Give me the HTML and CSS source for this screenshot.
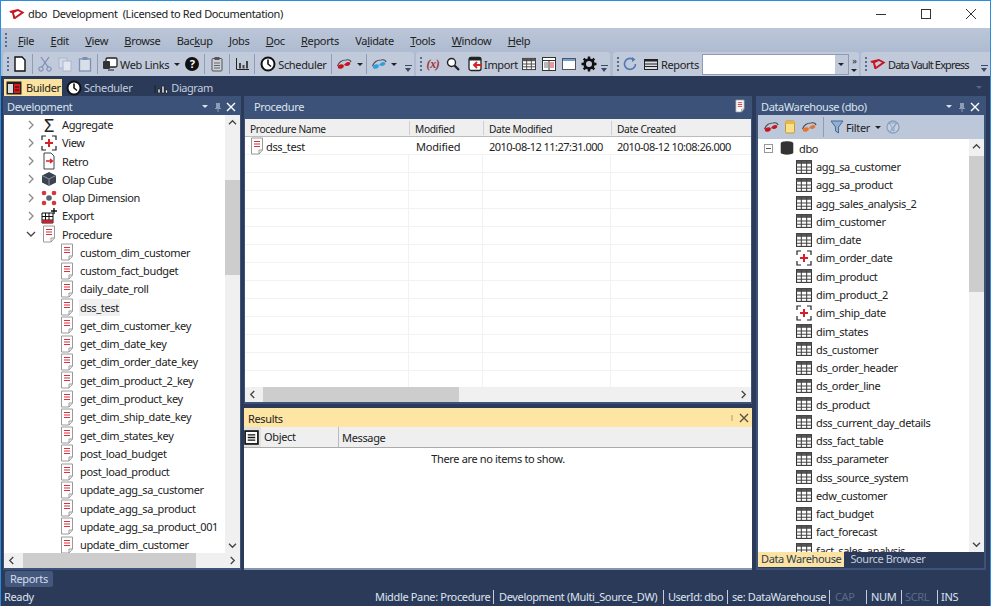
FILE: index.html
```html
<!DOCTYPE html>
<html lang="en">
<head>
    <meta charset="UTF-8">
    <title>dbo Development</title>
    <link rel="stylesheet" href="styles.css">
</head>
<body>
<svg class="sprites" width="0" height="0">
    <symbol id="i-proc" viewBox="0 0 16 18">
        <path d="M2.5 1 L13.5 1 L13.5 13 L10 17 L2.5 17 Z" fill="#fff" stroke="#9a9a9a"/>
        <path d="M10 17 L10 13 L13.5 13" fill="none" stroke="#9a9a9a"/>
        <path d="M5 4.5 H11 M5 7 H11 M5 9.5 H11" stroke="#d8323c" stroke-width="1.2"/>
    </symbol>
    <symbol id="i-table" viewBox="0 0 15 13">
        <rect x="0.5" y="0.5" width="14" height="12" fill="#fff" stroke="#333"/>
        <rect x="0.5" y="0.5" width="14" height="3" fill="#555"/>
        <path d="M5 1 V12.5 M10 1 V12.5 M1 6.5 H14 M1 9.5 H14" stroke="#444"/>
    </symbol>
    <symbol id="i-view" viewBox="0 0 16 16">
        <path d="M1 5 V1 H5 M11 1 H15 V5 M15 11 V15 H11 M5 15 H1 V11" fill="none" stroke="#222" stroke-width="1.2"/>
        <path d="M8 4 V12 M4 8 H12" stroke="#d8202c" stroke-width="2"/>
    </symbol>
    <symbol id="i-glasses" viewBox="0 0 16 12">
        <path d="M1.5 8 C3 4 6 2 10 2 C12 1.5 14.5 2 15 4" fill="none" stroke="#4a4a50" stroke-width="1.1"/>
        <ellipse cx="4.8" cy="8.6" rx="3" ry="2.1" fill="currentColor" transform="rotate(-15 4.8 8.6)"/>
        <ellipse cx="11.6" cy="6" rx="2.8" ry="1.9" fill="currentColor" transform="rotate(-20 11.6 6)"/>
        <path d="M7.5 7.5 L9 6.5" stroke="currentColor"/>
    </symbol>
    <symbol id="i-clock" viewBox="0 0 16 16">
        <circle cx="8" cy="8" r="6.5" fill="#fff" stroke="#111" stroke-width="2"/>
        <path d="M8 3.5 V8 L11 10.5" fill="none" stroke="#111" stroke-width="1.6"/>
    </symbol>
    <symbol id="i-chart" viewBox="0 0 14 12">
        <path d="M1.5 0 V11.5 H14" fill="none" stroke="#222"/>
        <path d="M4 5 H6 V10.5 H4 Z M7.5 7 H9.5 V10.5 H7.5 Z M11 3 H13 V10.5 H11 Z" fill="#444"/>
    </symbol>
    <symbol id="i-logo" viewBox="0 0 16 12">
        <path d="M0.5 3 L9 1 L15.5 4.5 L6 11 L4.5 11 L3 5 L1 4.5 Z M4.8 5 L6.2 8.8 L12 4.6 L8.8 3 Z" fill="#c8141e" fill-rule="evenodd"/>
    </symbol>
</svg>

<div class="window">
    <div class="titlebar">
        <svg class="title-logo"><use href="#i-logo"/></svg>
        <span class="title-text">dbo&nbsp; Development&nbsp; (Licensed to Red Documentation)</span>
        <div class="winbtns">
            <svg class="winbtn" viewBox="0 0 12 12"><path d="M1 6.5 H11" stroke="#333"/></svg>
            <svg class="winbtn" viewBox="0 0 12 12"><rect x="1.5" y="1.5" width="9" height="9" fill="none" stroke="#333"/></svg>
            <svg class="winbtn" viewBox="0 0 12 12"><path d="M1 1 L11 11 M11 1 L1 11" stroke="#333"/></svg>
        </div>
    </div>

    <div class="menubar">
        <i class="grip"></i>
        <span><u>F</u>ile</span>
        <span><u>E</u>dit</span>
        <span><u>V</u>iew</span>
        <span><u>B</u>rowse</span>
        <span>Bac<u>k</u>up</span>
        <span><u>J</u>obs</span>
        <span><u>D</u>oc</span>
        <span><u>R</u>eports</span>
        <span>Va<u>l</u>idate</span>
        <span><u>T</u>ools</span>
        <span><u>W</u>indow</span>
        <span><u>H</u>elp</span>
    </div>

    <div class="toolrow">
        <div class="toolbar tb-main">
            <i class="grip"></i>
            <span class="tool w20"><svg class="ic16" viewBox="0 0 14 16"><path d="M2 1 H9 L12 4 V15 H2 Z" fill="#fff" stroke="#111" stroke-width="1.4"/></svg></span>
            <i class="sep"></i>
            <span class="tool w20"><svg class="ic16" viewBox="0 0 16 16"><path d="M4 1 L11 11 M12 1 L5 11" stroke="#7c90b4" stroke-width="1.3"/><circle cx="4" cy="13" r="2.2" fill="none" stroke="#6f86ad"/><circle cx="12" cy="13" r="2.2" fill="none" stroke="#6f86ad"/></svg></span>
            <span class="tool w20"><svg class="ic16" viewBox="0 0 16 16"><rect x="2" y="2" width="8" height="10" fill="#d3dbe8" stroke="#a9b6cc"/><rect x="6" y="5" width="8" height="10" fill="#e3e8f0" stroke="#a9b6cc"/></svg></span>
            <span class="tool w20"><svg class="ic16" viewBox="0 0 16 16"><rect x="2.5" y="3" width="11" height="12" fill="#d8dfea" stroke="#7c90b4" stroke-width="1.3"/><rect x="5.5" y="1" width="5" height="3" fill="#7c90b4"/></svg></span>
            <i class="sep"></i>
            <span class="tool w20"><svg class="ic16" viewBox="0 0 16 16"><rect x="4" y="2" width="11" height="9" rx="1.5" fill="#fff" stroke="#222" stroke-width="1.3"/><rect x="1" y="5" width="7" height="8" rx="1" fill="#333"/><path d="M6 14 H12" stroke="#222"/></svg></span>
            <span class="tool-label">Web Links</span>
            <i class="drop d-web"></i>
            <span class="help">?</span>
            <i class="sep"></i>
            <span class="tool w20"><svg class="ic16" viewBox="0 0 14 16"><rect x="2" y="2.5" width="10" height="12.5" rx="1" fill="#c9ced8" stroke="#555"/><rect x="4.5" y="1" width="5" height="3" fill="#555"/><path d="M4 7 H10 M4 9.5 H10 M4 12 H10" stroke="#666"/></svg></span>
            <i class="sep"></i>
            <span class="tool w20"><svg class="ic14"><use href="#i-chart"/></svg></span>
            <i class="sep"></i>
            <span class="tool w20 ml1"><svg class="ic16"><use href="#i-clock"/></svg></span>
            <span class="tool-label lbl-sched">Scheduler</span>
            <i class="sep ml5"></i>
            <span class="tool w20 red"><svg class="ic16"><use href="#i-glasses"/></svg></span>
            <i class="drop d-red"></i>
            <i class="sep ml3"></i>
            <span class="tool w20 blue"><svg class="ic16"><use href="#i-glasses"/></svg></span>
            <i class="drop d-blue"></i>
            <i class="chev"></i>
        </div>
        <div class="toolbar tb-tools">
            <i class="grip"></i>
            <span class="tool w20 formula">(x)</span>
            <span class="tool w20"><svg class="ic14" viewBox="0 0 14 14"><circle cx="5.5" cy="5.5" r="4" fill="#fff" stroke="#222" stroke-width="1.4"/><path d="M8.5 8.5 L13 13" stroke="#222" stroke-width="2.2"/></svg></span>
            <span class="tool w18 ml3"><svg class="ic16" viewBox="0 0 16 16"><rect x="2" y="1.5" width="12" height="13" rx="2" fill="#fff" stroke="#222" stroke-width="1.3"/><rect x="2" y="1.5" width="12" height="3" fill="#222"/><path d="M15 9 H7 M10 6 L7 9 L10 12" fill="none" stroke="#d8202c" stroke-width="1.8"/></svg></span>
            <span class="tool-label lbl-import">Import</span>
            <span class="tool w20"><svg class="ic14"><use href="#i-table"/></svg></span>
            <span class="tool w20"><svg class="ic14" viewBox="0 0 14 14"><rect x="0.5" y="0.5" width="13" height="13" fill="#fff" stroke="#333"/><path d="M1 3.5 H13 M7 3.5 V13" stroke="#333"/><path d="M2 6 H6 M2 8 H6 M2 10 H6" stroke="#777"/><path d="M8 6 H12 M8 8 H12 M8 10 H12" stroke="#d8323c"/></svg></span>
            <span class="tool w20"><svg class="ic14" viewBox="0 0 14 12"><rect x="0.5" y="0.5" width="13" height="11" fill="#fff" stroke="#555"/><rect x="1" y="1" width="12" height="2" fill="#6aa0e0"/></svg></span>
            <span class="tool w20"><svg class="ic16" viewBox="0 0 16 16"><circle cx="8" cy="8" r="4.4" fill="none" stroke="#111" stroke-width="2.8"/><path d="M8 0.5 V15.5 M0.5 8 H15.5 M2.7 2.7 L13.3 13.3 M13.3 2.7 L2.7 13.3" stroke="#111" stroke-width="2.4" stroke-dasharray="3 9"/></svg></span>
            <i class="chev"></i>
        </div>
        <div class="toolbar tb-reports">
            <i class="grip"></i>
            <span class="tool w20"><svg class="ic14" viewBox="0 0 14 14"><path d="M12.5 7 A5.5 5.5 0 1 1 9.5 2" fill="none" stroke="#4f78b4" stroke-width="1.6"/><path d="M9 0 L12.5 2.5 L9 5 Z" fill="#4f78b4"/></svg></span>
            <span class="tool w20 ml1"><svg class="ic14" viewBox="0 0 14 12"><rect x="0.5" y="1.5" width="13" height="10" fill="#d8dce4" stroke="#222"/><rect x="0.5" y="1.5" width="13" height="2" fill="#222"/><path d="M1 6 H13 M1 8.5 H13" stroke="#222"/></svg></span>
            <span class="tool-label">Reports</span>
            <div class="combo"><div class="combo-btn"><i class="drop"></i></div></div>
            <div class="more"><span>&raquo;</span><i class="drop"></i></div>
        </div>
        <div class="toolbar tb-vault">
            <i class="grip"></i>
            <span class="tool w20"><svg class="ic16"><use href="#i-logo"/></svg></span>
            <span class="tool-label lbl-vault">Data Vault Express</span>
            <i class="chev"></i>
        </div>
    </div>

    <div class="tabstrip">
        <div class="tab tab-on">
            <svg class="ic16" viewBox="0 0 16 14"><rect x="0.5" y="0.5" width="15" height="13" fill="#222"/><rect x="2" y="3" width="5" height="9" fill="#ddd"/><rect x="8" y="3" width="6" height="9" fill="#e01818"/><path d="M9 6 H13 M9 9 H13" stroke="#111"/></svg>
            Builder
        </div>
        <div class="tab"><svg class="ic16"><use href="#i-clock"/></svg>Scheduler</div>
        <div class="tab tab-diagram"><svg class="ic14" viewBox="0 0 14 12"><path d="M1 3 V11 M4 7 H6 V11 H4 Z M8 4 H10 V11 H8 Z M11.5 8 H13.5 V11 H11.5 Z" fill="#fff" stroke="#111" stroke-width="0.6"/></svg>Diagram</div>
        <i class="drop strip-drop"></i>
    </div>

    <div class="work">
        <section class="pane pane-left">
            <header class="pane-head">
                <span class="pane-title">Development</span>
                <i class="drop"></i>
                <svg class="pin" viewBox="0 0 8 10"><path d="M2 1 H6 V6 H7 V7 H4.5 V10 H3.5 V7 H1 V6 H2 Z" fill="#8d9bb5"/></svg>
                <svg class="close" viewBox="0 0 10 10"><path d="M1 1 L9 9 M9 1 L1 9" stroke="#fff" stroke-width="1.4"/></svg>
            </header>
            <div class="scroll-area">
                <div class="tree">
                    <div class="row group"><svg class="twist" viewBox="0 0 8 10"><path d="M2 1 L6 5 L2 9" /></svg><span class="sigma">&Sigma;</span><span>Aggregate</span></div>
                    <div class="row group"><svg class="twist" viewBox="0 0 8 10"><path d="M2 1 L6 5 L2 9" /></svg><svg class="ic"><use href="#i-view"/></svg><span>View</span></div>
                    <div class="row group"><svg class="twist" viewBox="0 0 8 10"><path d="M2 1 L6 5 L2 9" /></svg><svg class="ic" viewBox="0 0 16 18"><path d="M3 1 H10 L13 4 V17 H3 Z" fill="#fff" stroke="#444"/><path d="M5 9 H11 M9 7 L11.5 9 L9 11" fill="none" stroke="#d8202c" stroke-width="1.4"/></svg><span>Retro</span></div>
                    <div class="row group"><svg class="twist" viewBox="0 0 8 10"><path d="M2 1 L6 5 L2 9" /></svg><svg class="ic" viewBox="0 0 16 16"><path d="M8 1 L15 4.5 V11.5 L8 15 L1 11.5 V4.5 Z" fill="#3c4350"/><path d="M1 4.5 L8 8 L15 4.5 M8 8 V15" fill="none" stroke="#8b93a3"/></svg><span>Olap Cube</span></div>
                    <div class="row group"><svg class="twist" viewBox="0 0 8 10"><path d="M2 1 L6 5 L2 9" /></svg><svg class="ic" viewBox="0 0 16 16"><circle cx="3" cy="3" r="2.3" fill="#d8353c"/><circle cx="13" cy="3" r="2.3" fill="#d8353c"/><circle cx="3" cy="13" r="2.3" fill="#d8353c"/><circle cx="13" cy="13" r="2.3" fill="#d8353c"/><circle cx="8" cy="8" r="2.8" fill="#59626f"/></svg><span>Olap Dimension</span></div>
                    <div class="row group"><svg class="twist" viewBox="0 0 8 10"><path d="M2 1 L6 5 L2 9" /></svg><svg class="ic" viewBox="0 0 16 16"><path d="M1 5 H12 V15 H1 Z M4.5 5 V15 M8 5 V15 M1 8.5 H12 M1 12 H12" fill="#fff" stroke="#111"/><rect x="1" y="12" width="11" height="3" fill="#c8202c"/><path d="M13 0 V6 M10 3 H16" stroke="#111" stroke-width="1.4"/></svg><span>Export</span></div>
                    <div class="row group"><svg class="twist open" viewBox="0 0 10 8"><path d="M1 2 L5 6 L9 2" /></svg><svg class="ic"><use href="#i-proc"/></svg><span>Procedure</span></div>
                    <div class="row leaf"><svg class="ic"><use href="#i-proc"/></svg><span>custom_dim_customer</span></div>
                    <div class="row leaf"><svg class="ic"><use href="#i-proc"/></svg><span>custom_fact_budget</span></div>
                    <div class="row leaf"><svg class="ic"><use href="#i-proc"/></svg><span>daily_date_roll</span></div>
                    <div class="row leaf"><svg class="ic"><use href="#i-proc"/></svg><span class="picked">dss_test</span></div>
                    <div class="row leaf"><svg class="ic"><use href="#i-proc"/></svg><span>get_dim_customer_key</span></div>
                    <div class="row leaf"><svg class="ic"><use href="#i-proc"/></svg><span>get_dim_date_key</span></div>
                    <div class="row leaf"><svg class="ic"><use href="#i-proc"/></svg><span>get_dim_order_date_key</span></div>
                    <div class="row leaf"><svg class="ic"><use href="#i-proc"/></svg><span>get_dim_product_2_key</span></div>
                    <div class="row leaf"><svg class="ic"><use href="#i-proc"/></svg><span>get_dim_product_key</span></div>
                    <div class="row leaf"><svg class="ic"><use href="#i-proc"/></svg><span>get_dim_ship_date_key</span></div>
                    <div class="row leaf"><svg class="ic"><use href="#i-proc"/></svg><span>get_dim_states_key</span></div>
                    <div class="row leaf"><svg class="ic"><use href="#i-proc"/></svg><span>post_load_budget</span></div>
                    <div class="row leaf"><svg class="ic"><use href="#i-proc"/></svg><span>post_load_product</span></div>
                    <div class="row leaf"><svg class="ic"><use href="#i-proc"/></svg><span>update_agg_sa_customer</span></div>
                    <div class="row leaf"><svg class="ic"><use href="#i-proc"/></svg><span>update_agg_sa_product</span></div>
                    <div class="row leaf"><svg class="ic"><use href="#i-proc"/></svg><span>update_agg_sa_product_001</span></div>
                    <div class="row leaf"><svg class="ic"><use href="#i-proc"/></svg><span>update_dim_customer</span></div>
                </div>
                <div class="vscroll">
                    <svg class="arrow" viewBox="0 0 10 8"><path d="M1 6 L5 2 L9 6"/></svg>
                    <div class="vtrack"><div class="vthumb thumb-left"></div></div>
                    <svg class="arrow" viewBox="0 0 10 8"><path d="M1 2 L5 6 L9 2"/></svg>
                </div>
            </div>
            <div class="hscroll hscroll-left">
                <svg class="arrow-h" viewBox="0 0 8 10"><path d="M6 1 L2 5 L6 9"/></svg>
                <div class="htrack"><div class="hthumb thumb-h-left"></div></div>
                <svg class="arrow-h" viewBox="0 0 8 10"><path d="M2 1 L6 5 L2 9"/></svg>
            </div>
        </section>

        <div class="middle">
            <section class="pane pane-proc">
                <header class="pane-head proc-head">
                    <span class="pane-title">Procedure</span>
                    <svg class="head-doc"><use href="#i-proc"/></svg>
                </header>
                <div class="grid">
                    <div class="grid-head">
                        <span class="col1">Procedure Name</span>
                        <span class="col2">Modified</span>
                        <span class="col3">Date Modified</span>
                        <span class="col4">Date Created</span>
                    </div>
                    <div class="grid-row">
                        <span class="col1"><svg class="ic"><use href="#i-proc"/></svg>dss_test</span>
                        <span class="col2">Modified</span>
                        <span class="col3">2010-08-12 11:27:31.000</span>
                        <span class="col4">2010-08-12 10:08:26.000</span>
                    </div>
                    <div class="grid-blank"></div>
                </div>
                <div class="hscroll hscroll-proc">
                    <svg class="arrow-h" viewBox="0 0 8 10"><path d="M6 1 L2 5 L6 9"/></svg>
                    <div class="htrack"><div class="hthumb thumb-h-proc"></div></div>
                    <svg class="arrow-h" viewBox="0 0 8 10"><path d="M2 1 L6 5 L2 9"/></svg>
                </div>
            </section>
            <section class="results">
                <header class="results-head">
                    <span>Results</span>
                    <svg class="pin" viewBox="0 0 8 10"><path d="M4 2 V8" stroke="#a89a78"/></svg>
                    <svg class="close" viewBox="0 0 10 10"><path d="M1 1 L9 9 M9 1 L1 9" stroke="#5a5140" stroke-width="1.4"/></svg>
                </header>
                <div class="results-cols">
                    <span class="res-menu"><svg viewBox="0 0 14 14"><rect x="1" y="1" width="12" height="12" fill="#fff" stroke="#111" stroke-width="1.6"/><path d="M3.5 4.5 H10.5 M3.5 7 H10.5 M3.5 9.5 H10.5" stroke="#111" stroke-width="1.2"/></svg></span>
                    <span class="res-object">Object</span>
                    <span class="res-message">Message</span>
                </div>
                <div class="results-empty">There are no items to show.</div>
            </section>
        </div>

        <section class="pane pane-right">
            <header class="pane-head">
                <span class="pane-title">DataWarehouse (dbo)</span>
                <i class="drop"></i>
                <svg class="pin" viewBox="0 0 8 10"><path d="M2 1 H6 V6 H7 V7 H4.5 V10 H3.5 V7 H1 V6 H2 Z" fill="#8d9bb5"/></svg>
                <svg class="close" viewBox="0 0 10 10"><path d="M1 1 L9 9 M9 1 L1 9" stroke="#fff" stroke-width="1.4"/></svg>
            </header>
            <div class="dw-tools">
                <span class="tool w20 red"><svg class="ic16"><use href="#i-glasses"/></svg></span>
                <span class="tool w18"><svg class="ic14" viewBox="0 0 12 14"><rect x="1.5" y="1" width="9" height="12" rx="1.5" fill="#fbe08a" stroke="#c09a30"/><rect x="1.5" y="1" width="9" height="3" fill="#eab83c"/></svg></span>
                <span class="tool w20 orange"><svg class="ic16"><use href="#i-glasses"/></svg></span>
                <i class="sep"></i>
                <span class="tool w18"><svg class="ic14" viewBox="0 0 14 14"><path d="M1 1 H13 L8.5 7 V13 L5.5 11 V7 Z" fill="#8fb0d8" stroke="#47688f"/></svg></span>
                <span class="tool-label">Filter</span>
                <i class="drop d-filter"></i>
                <svg class="ic14" viewBox="0 0 14 14"><circle cx="7" cy="7" r="6" fill="#c6d0e0" stroke="#8aa0c0" stroke-width="1.3"/><path d="M3 3 H11 L8 7 V11 L6 10 V7 Z M11 2 L4 12" fill="none" stroke="#8aa0c0"/></svg>
            </div>
            <div class="scroll-area">
                <div class="tree tree-dw">
                    <div class="row dw-root"><span class="minus"></span><svg class="ic" viewBox="0 0 14 14"><path d="M1.5 3 C1.5 0.5 12.5 0.5 12.5 3 V11 C12.5 13.5 1.5 13.5 1.5 11 Z" fill="#333"/></svg><span>dbo</span></div>
                    <div class="row dw"><svg class="ic"><use href="#i-table"/></svg><span>agg_sa_customer</span></div>
                    <div class="row dw"><svg class="ic"><use href="#i-table"/></svg><span>agg_sa_product</span></div>
                    <div class="row dw"><svg class="ic"><use href="#i-table"/></svg><span>agg_sales_analysis_2</span></div>
                    <div class="row dw"><svg class="ic"><use href="#i-table"/></svg><span>dim_customer</span></div>
                    <div class="row dw"><svg class="ic"><use href="#i-table"/></svg><span>dim_date</span></div>
                    <div class="row dw"><svg class="ic"><use href="#i-view"/></svg><span>dim_order_date</span></div>
                    <div class="row dw"><svg class="ic"><use href="#i-table"/></svg><span>dim_product</span></div>
                    <div class="row dw"><svg class="ic"><use href="#i-table"/></svg><span>dim_product_2</span></div>
                    <div class="row dw"><svg class="ic"><use href="#i-view"/></svg><span>dim_ship_date</span></div>
                    <div class="row dw"><svg class="ic"><use href="#i-table"/></svg><span>dim_states</span></div>
                    <div class="row dw"><svg class="ic"><use href="#i-table"/></svg><span>ds_customer</span></div>
                    <div class="row dw"><svg class="ic"><use href="#i-table"/></svg><span>ds_order_header</span></div>
                    <div class="row dw"><svg class="ic"><use href="#i-table"/></svg><span>ds_order_line</span></div>
                    <div class="row dw"><svg class="ic"><use href="#i-table"/></svg><span>ds_product</span></div>
                    <div class="row dw"><svg class="ic"><use href="#i-table"/></svg><span>dss_current_day_details</span></div>
                    <div class="row dw"><svg class="ic"><use href="#i-table"/></svg><span>dss_fact_table</span></div>
                    <div class="row dw"><svg class="ic"><use href="#i-table"/></svg><span>dss_parameter</span></div>
                    <div class="row dw"><svg class="ic"><use href="#i-table"/></svg><span>dss_source_system</span></div>
                    <div class="row dw"><svg class="ic"><use href="#i-table"/></svg><span>edw_customer</span></div>
                    <div class="row dw"><svg class="ic"><use href="#i-table"/></svg><span>fact_budget</span></div>
                    <div class="row dw"><svg class="ic"><use href="#i-table"/></svg><span>fact_forecast</span></div>
                    <div class="row dw"><svg class="ic"><use href="#i-table"/></svg><span>fact_sales_analysis</span></div>
                </div>
                <div class="vscroll">
                    <svg class="arrow" viewBox="0 0 10 8"><path d="M1 6 L5 2 L9 6"/></svg>
                    <div class="vtrack"><div class="vthumb thumb-right"></div></div>
                    <svg class="arrow" viewBox="0 0 10 8"><path d="M1 2 L5 6 L9 2"/></svg>
                </div>
            </div>
            <div class="dw-tabs">
                <span class="dw-tab-on">Data Warehouse</span>
                <span class="dw-tab">Source Browser</span>
            </div>
        </section>
    </div>

    <div class="dockbar"><span class="dock-tab">Reports</span></div>

    <footer class="statusbar">
        <span class="st-ready">Ready</span>
        <span class="st st-pane">Middle Pane: Procedure</span>
        <span class="st st-dev">Development (Multi_Source_DW)</span>
        <span class="st st-user">UserId: dbo</span>
        <span class="st st-db">se: DataWarehouse</span>
        <span class="st st-cap dim">CAP</span>
        <span class="st st-num">NUM</span>
        <span class="st st-scrl dim">SCRL</span>
        <span class="st st-ins">INS</span>
    </footer>
</div>
</body>
</html>
```

FILE: styles.css
```css
* { box-sizing: border-box; }
html, body { margin: 0; padding: 0; height: 100%; overflow: hidden; }
body { font-family: "Noto Sans", "Open Sans", sans-serif; font-size: 11px; letter-spacing: -0.35px; color: #222; background: #2a3a58; }
i { display: block; font-style: normal; }
svg { display: block; flex: none; }
.sprites { position: absolute; }

.window { height: 606px; display: flex; flex-direction: column; border-top: 1px solid #2a8ee0; border-left: 1px solid #2a8ee0; border-right: 1px solid #2a8ee0; background: #2a3a58; }

/* title */
.titlebar { height: 27px; background: #fff; display: flex; align-items: center; padding: 0 0 2px 8px; flex: none; }
.title-logo { width: 16px; height: 12px; margin-right: 3px; }
.title-text { color: #222; }
.winbtns { margin-left: auto; display: flex; gap: 33px; padding-right: 13px; }
.winbtn { width: 12px; height: 12px; }

/* menu + toolbars */
.menubar { height: 24px; flex: none; background: linear-gradient(#bcc6d8, #aebbd0); display: flex; align-items: center; padding-left: 4px; color: #222; }
.menubar span { margin-right: 16.4px; }
.menubar .grip { margin-right: 11px; }
.grip { width: 2px; height: 15px; background: repeating-linear-gradient(#5a6c8c 0 2px, transparent 2px 4px); flex: none; }
.toolrow { height: 24px; flex: none; display: flex; gap: 2px; padding-left: 2px; background: #aebbd0; }
.toolbar { height: 24px; display: flex; align-items: center; background: #c0cadb; border-radius: 3px 3px 0 0; padding-left: 4px; flex: none; }
.tb-main { width: 411px; }
.tb-tools { width: 194px; }
.tb-reports { width: 246px; margin-left: 1px; }
.tb-vault { flex: 1; border-radius: 3px 0 0 0; }
.toolbar > .grip { margin-right: 1px; }
.tool { display: flex; align-items: center; justify-content: center; flex: none; height: 22px; }
.w18 { width: 18px; }
.w20 { width: 20px; }
.ml1 { margin-left: 1px; }
.ml3 { margin-left: 3px; }
.ic16 { width: 16px; height: 16px; }
.ic14 { width: 14px; height: 14px; }
.sep { width: 1px; height: 20px; background: #8e9cb6; flex: none; margin: 0 2px; }
.sep.ml5 { margin-left: 5px; }
.sep.ml3 { margin-left: 3px; }
.tool-label { color: #222; white-space: nowrap; flex: none; }
.lbl-import { width: 35px; }
.lbl-sched { width: 48px; }
.lbl-vault { letter-spacing: -0.85px; }
.drop { width: 0; height: 0; border-left: 3.5px solid transparent; border-right: 3.5px solid transparent; border-top: 3.5px solid #222; flex: none; }
.d-web { margin: 0 5px 0 5px; }
.d-red { margin-left: 3px; }
.d-blue { margin-left: 2px; }
.d-filter { margin: 0 5px 0 5px; }
.help { width: 14px; height: 14px; border-radius: 50%; background: #111; color: #fff; font-weight: bold; font-size: 11px; line-height: 14px; text-align: center; margin-right: 3px; flex: none; }
.red { color: #c8141e; }
.blue { color: #2f9fe0; }
.orange { color: #e8742a; }
.formula { color: #a0303a; font-family: "Liberation Serif", serif; font-style: italic; font-weight: bold; font-size: 12px; }
.chev { width: 7px; height: 8px; margin: 0 2px 3px auto; align-self: flex-end; background: linear-gradient(#3a4a68, #3a4a68) top / 7px 1px no-repeat; position: relative; }
.chev::after { content: ""; position: absolute; left: 0; top: 3px; border-left: 3.5px solid transparent; border-right: 3.5px solid transparent; border-top: 4px solid #3a4a68; }
.combo { width: 147px; height: 21px; margin-left: 3px; background: #fff; border: 1px solid #8e9cb6; display: flex; justify-content: flex-end; flex: none; }
.combo-btn { width: 13px; background: #c0cadb; display: flex; align-items: center; justify-content: center; }
.more { width: 11px; margin-left: 1px; display: flex; flex-direction: column; align-items: center; gap: 4px; font-size: 9px; line-height: 9px; }

/* tabs */
.tabstrip { height: 20px; flex: none; display: flex; align-items: flex-end; padding-left: 3px; color: #c3cddf; }
.tab { height: 17px; display: flex; align-items: center; gap: 2px; padding: 0 2px; white-space: nowrap; }
.tab-on { background: #fde3a0; color: #222; width: 58px; margin-right: 2px; gap: 4px; }
.tab-diagram { margin-left: 18px; gap: 3px; letter-spacing: -0.45px; }
.strip-drop { margin: 0 8px 7px auto; border-top-color: #54668a; }

/* panes */
.work { height: 474px; flex: none; display: flex; padding-left: 2px; }
.pane { display: flex; flex-direction: column; background: #3c5278; }
.pane-left { width: 238px; padding: 0 1px 2px 1px; }
.pane-right { width: 230px; margin-left: 4px; padding: 0 2px 2px 2px; }
.pane-head { height: 19px; flex: none; display: flex; align-items: center; color: #dde4f0; padding: 2px 4px 0 3px; }
.pane-title { margin-right: auto; }
.pane-head .drop { border-top-color: #dde4f0; margin-right: 6px; }
.pin { width: 8px; height: 10px; margin-right: 4px; }
.close { width: 10px; height: 10px; }
.scroll-area { flex: 1; min-height: 0; display: flex; background: #fff; }
.tree { flex: 1; min-width: 0; overflow: hidden; padding-top: 0.4px; }
.row { height: 18.27px; display: flex; align-items: center; white-space: nowrap; color: #222; }
.ic { width: 16px; height: 18px; flex: none; }
.twist { width: 10px; height: 10px; fill: none; stroke: #8a8a8a; stroke-width: 1.3; margin-right: 5px; }
.twist.open { stroke: #444; }
.group { padding-left: 22px; }
.group > span:last-child { margin-left: 5px; }
.sigma { width: 16px; font-size: 18px; line-height: 18px; text-align: center; color: #222; }
.leaf { padding-left: 55px; }
.leaf .ic { margin-right: 4px; }
.leaf span { padding: 0 1px; height: 17px; line-height: 17px; }
.picked { background: #f0f0f0; }
.vscroll { width: 15px; flex: none; background: #f0f0f0; display: flex; flex-direction: column; }
.arrow { width: 15px; height: 15px; padding: 4px 3px; fill: none; stroke: #444; stroke-width: 1.5; flex: none; }
.vtrack { flex: 1; min-height: 0; }
.vthumb { background: #cdcdcd; }
.thumb-left { margin-top: 50px; height: 95px; }
.thumb-right { margin-top: 2px; height: 136px; }
.hscroll { height: 15px; flex: none; display: flex; background: #f0f0f0; }
.arrow-h { width: 15px; height: 15px; padding: 3px 4px; fill: none; stroke: #444; stroke-width: 1.5; flex: none; }
.htrack { flex: 1; min-width: 0; }
.hthumb { height: 15px; background: #cdcdcd; }
.thumb-h-left { margin-left: 4px; width: 173px; }
.thumb-h-proc { margin-left: 3px; width: 196px; }

/* middle */
.middle { width: 508px; margin-left: 3px; display: flex; flex-direction: column; gap: 4px; }
.pane-proc { height: 308px; flex: none; padding: 0 1px 2px 1px; }
.proc-head { height: 23px; padding: 0 4px 3px 3px; }
.proc-head .pane-title { margin-left: 6px; }
.head-doc { width: 12px; height: 14px; margin-right: 1px; }
.grid { flex: 1; min-height: 0; background: #fff; display: flex; flex-direction: column; }
.grid-head, .grid-row { display: grid; grid-template-columns: 164px 74px 128px 1fr; align-items: center; flex: none; }
.grid-head { height: 18px; background: #efefef; border-bottom: 1px solid #bbb; font-size: 10.2px; padding-top: 1px; }
.grid-head span { padding-left: 5px; height: 14px; line-height: 16px; border-left: 1px solid #cfcfcf; }
.grid-head .col1 { border-left: 0; }
.grid-row { height: 18px; border-bottom: 1px solid #f2f2f2; }
.grid-row span { padding: 0 0 2px 6px; display: flex; align-items: center; white-space: nowrap; }
.grid-row .col1 { padding-left: 4px; }
.grid-row .col2 { letter-spacing: -0.2px; padding-left: 7px; }
.grid-row .col3, .grid-row .col4 { letter-spacing: -0.52px; }
.grid-row .ic { margin-right: 1px; }
.grid-blank { flex: 1; background:
    linear-gradient(#f2f2f2, #f2f2f2) 163px 0 / 1px 100% no-repeat,
    linear-gradient(#f2f2f2, #f2f2f2) 237px 0 / 1px 100% no-repeat,
    linear-gradient(#f2f2f2, #f2f2f2) 365px 0 / 1px 100% no-repeat,
    repeating-linear-gradient(#fff 0 17px, #f2f2f2 17px 18px); }

.results { flex: 1; min-height: 0; display: flex; flex-direction: column; background: #fff; border-bottom: 2px solid #8695b0; }
.results-head { height: 19px; flex: none; background: #fee5a3; display: flex; align-items: center; padding: 1px 3px 0 4px; }
.results-head span { margin-right: auto; }
.results-head .pin { margin-right: 3px; }
.results-cols { height: 21px; flex: none; display: flex; align-items: center; background: #efefef; border-bottom: 1px solid #aaa; }
.res-menu { width: 17px; height: 20px; display: flex; align-items: center; background: #e0e0e0; }
.res-menu svg { width: 15px; height: 15px; }
.res-object { width: 78px; padding-left: 3px; line-height: 20px; border-right: 1px solid #bbb; }
.res-message { padding-left: 3px; }
.results-empty { text-align: center; padding-top: 3px; }

/* right */
.dw-tools { height: 24px; flex: none; background: #bcc8da; display: flex; align-items: center; padding-left: 3px; }
.dw-tools .sep { margin: 0 4px; }
.tree-dw { padding-top: 0.25px; }
.dw-root { padding-left: 6px; }
.minus { width: 9px; height: 9px; border: 1px solid #999; margin-right: 6px; background: linear-gradient(#555, #555) center / 5px 1px no-repeat; }
.dw-root .ic { margin-right: 4px; }
.dw { padding-left: 38px; }
.dw .ic { margin-right: 4px; }
.dw-tabs { height: 16px; flex: none; display: flex; align-items: flex-start; background: #2a3a58; color: #c3cddf; }
.dw-tab-on { background: #fde3a0; color: #2a3a58; height: 15px; line-height: 14px; padding: 0 3px; letter-spacing: -0.37px; }
.dw-tab { padding-left: 6px; line-height: 14px; letter-spacing: -0.42px; }

/* bottom */
.dockbar { height: 20px; flex: none; padding: 1px 0 0 4px; }
.dock-tab { display: inline-block; height: 16px; line-height: 16px; padding: 0 5px; background: #44587e; color: #d4dcea; border-radius: 2px; }
.statusbar { flex: 1; display: flex; align-items: flex-start; color: #dde4f0; white-space: nowrap; }
.st-ready { margin-left: 3px; margin-right: auto; line-height: 14px; }
.st { border-right: 1px solid #c3cddf; height: 14px; line-height: 14px; overflow: hidden; }
.st-pane { width: 119px; }
.st-dev { width: 170px; padding-left: 5px; }
.st-user { width: 64px; padding-left: 4px; letter-spacing: -0.5px; }
.st-db { width: 102px; padding-right: 3px; text-align: right; }
.st-cap { width: 37px; padding-left: 5px; }
.st-num { width: 35px; padding-left: 4px; }
.st-scrl { width: 36px; padding-left: 3px; }
.st-ins { width: 52px; padding-left: 3px; border-right: 0; }
.dim { color: #5a6b8a; }
```
